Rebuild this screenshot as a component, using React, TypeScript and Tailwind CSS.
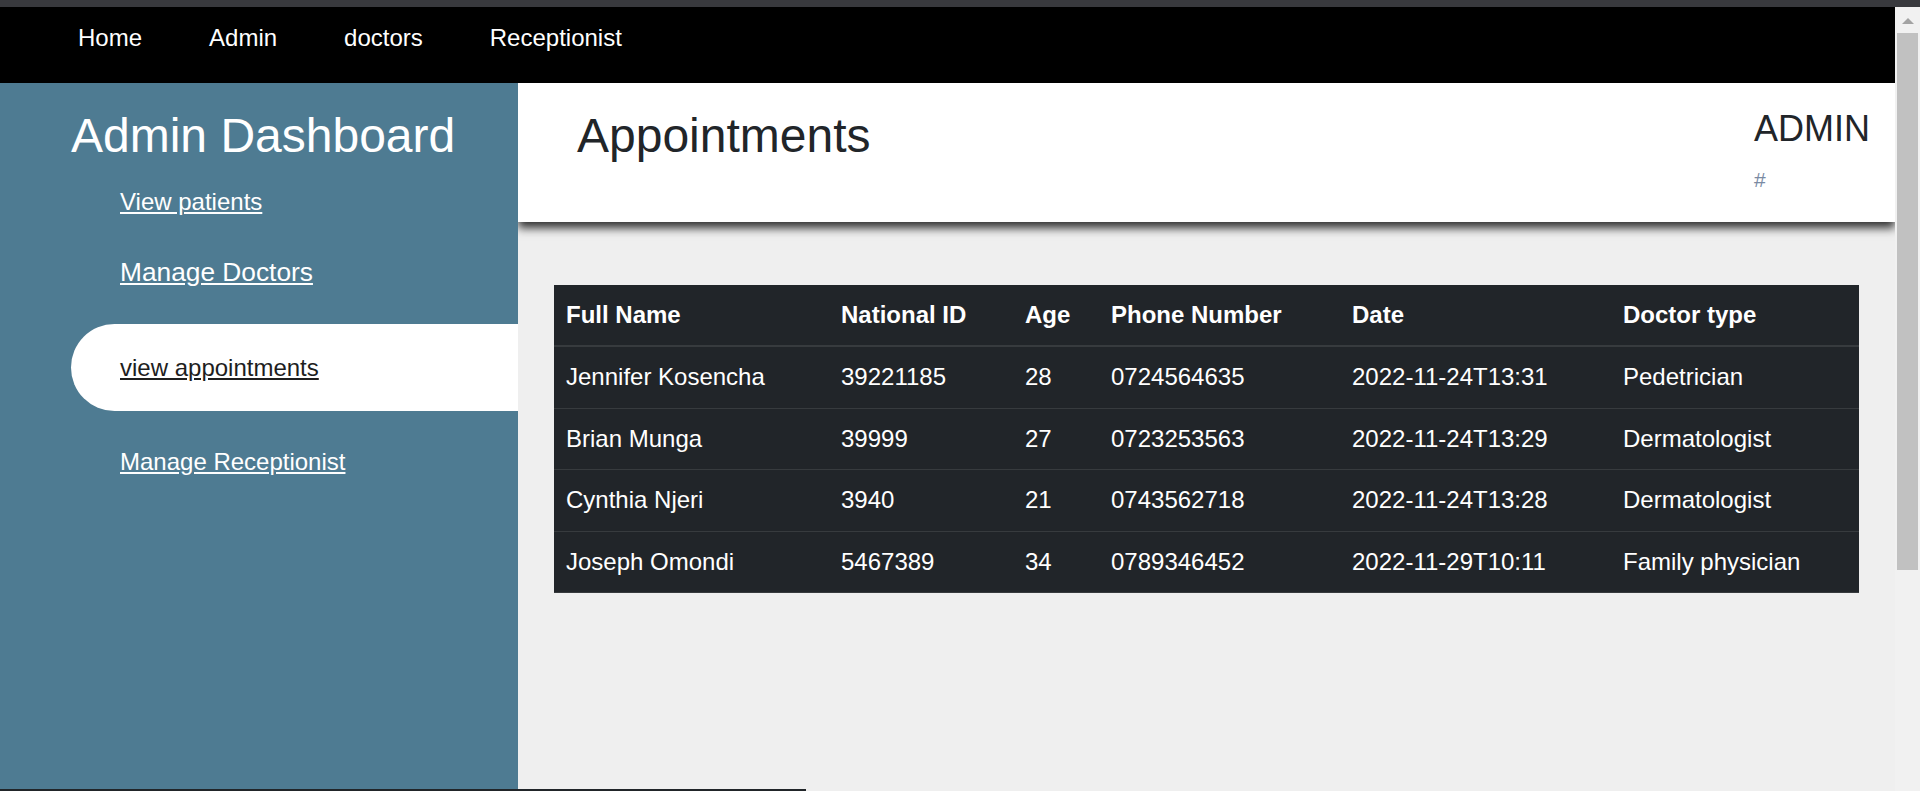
import React from "react";

const rows = [
  ["Jennifer Kosencha", "39221185", "28", "0724564635", "2022-11-24T13:31", "Pedetrician"],
  ["Brian Munga", "39999", "27", "0723253563", "2022-11-24T13:29", "Dermatologist"],
  ["Cynthia Njeri", "3940", "21", "0743562718", "2022-11-24T13:28", "Dermatologist"],
  ["Joseph Omondi", "5467389", "34", "0789346452", "2022-11-29T10:11", "Family physician"],
];

const headers = ["Full Name", "National ID", "Age", "Phone Number", "Date", "Doctor type"];
const widths = ["w-[275px]", "w-[184px]", "w-[86px]", "w-[241px]", "w-[271px]", "w-[248px]"];

export default function App() {
  return (
    <div
      className="relative w-[1920px] h-[791px] overflow-hidden flex flex-col bg-[#efefef]"
      style={{ fontFamily: '"Liberation Sans", Arial, Helvetica, sans-serif' }}
    >
      <div className="h-[7px] bg-[#38393d] shrink-0" />
      <div className="flex flex-1 min-h-0">
        <div className="flex-1 flex flex-col min-w-0">
          {/* navbar */}
          <nav className="h-[76px] bg-black shrink-0 flex items-start pl-[78px] pt-[13px] gap-[67px] text-white text-[24px] leading-[36px]">
            <a>Home</a>
            <a>Admin</a>
            <a>doctors</a>
            <a>Receptionist</a>
          </nav>
          <div className="flex flex-1 min-h-0">
            {/* sidebar */}
            <aside className="w-[518px] shrink-0 bg-[#4e7b92] flex flex-col pt-[24px]">
              <h1 className="pl-[71px] text-white text-[48px] leading-[58px]">Admin Dashboard</h1>
              <a className="mt-[19px] pl-[120px] text-white text-[24px] leading-[36px]">
                <span className="underline">View patients</span>
              </a>
              <a className="mt-[33px] pl-[120px] text-white text-[26.3px] leading-[39px]">
                <span className="underline">Manage Doctors</span>
              </a>
              <div className="mt-[32px] ml-[71px] h-[87px] bg-white rounded-l-[44px] pl-[49px] pt-[26px]">
                <a className="text-[#1e1e1e] text-[24px] leading-[36px] underline">view appointments</a>
              </div>
              <a className="mt-[33px] pl-[120px] text-white text-[24px] leading-[36px]">
                <span className="underline">Manage Receptionist</span>
              </a>
            </aside>
            {/* main */}
            <main className="flex-1 min-w-0 overflow-hidden flex flex-col">
              <header className="relative z-10 h-[139px] shrink-0 bg-white shadow-[0_6px_9px_rgba(0,0,0,0.8)] flex justify-between">
                <h2 className="pl-[59px] pt-[24px] text-[#212529] text-[48px] leading-[58px]">Appointments</h2>
                <div className="w-[141px] pt-[24px] flex flex-col">
                  <span className="text-[#212529] text-[36px] leading-[43px]">ADMIN</span>
                  <a className="mt-[18px] text-[#7a8aa3] text-[21px] leading-[24px]">#</a>
                </div>
              </header>
              <div className="flex-1 bg-[#efefef] px-[36px] pt-[63px]">
                <table className="w-[1305px] table-fixed border-collapse bg-[#212529] text-white text-[24px] leading-[36px]">
                  <thead>
                    <tr className="border-b-2 border-[#373b3e]">
                      {headers.map((h, i) => (
                        <th key={h} className={`${widths[i]} px-[12px] py-[12px] text-left font-bold`}>
                          {h}
                        </th>
                      ))}
                    </tr>
                  </thead>
                  <tbody>
                    {rows.map((r) => (
                      <tr key={r[0]} className="border-b border-[#373b3e]">
                        {r.map((c, i) => (
                          <td key={i} className="px-[12px] pt-[12px] pb-[12.5px] whitespace-nowrap">
                            {c}
                          </td>
                        ))}
                      </tr>
                    ))}
                  </tbody>
                </table>
              </div>
            </main>
          </div>
        </div>
        {/* scrollbar */}
        <div className="w-[25px] shrink-0 bg-[#f1f1f1] flex flex-col items-center">
          <div className="mt-[11px] w-0 h-0 border-l-[6px] border-r-[6px] border-b-[6px] border-l-transparent border-r-transparent border-b-[#a3a3a3]" />
          <div className="mt-[9px] w-[21px] h-[537px] bg-[#c1c1c1]" />
        </div>
      </div>
      <div className="absolute bottom-0 left-0 h-[2px] w-[806px] bg-[#212529]" />
    </div>
  );
}
